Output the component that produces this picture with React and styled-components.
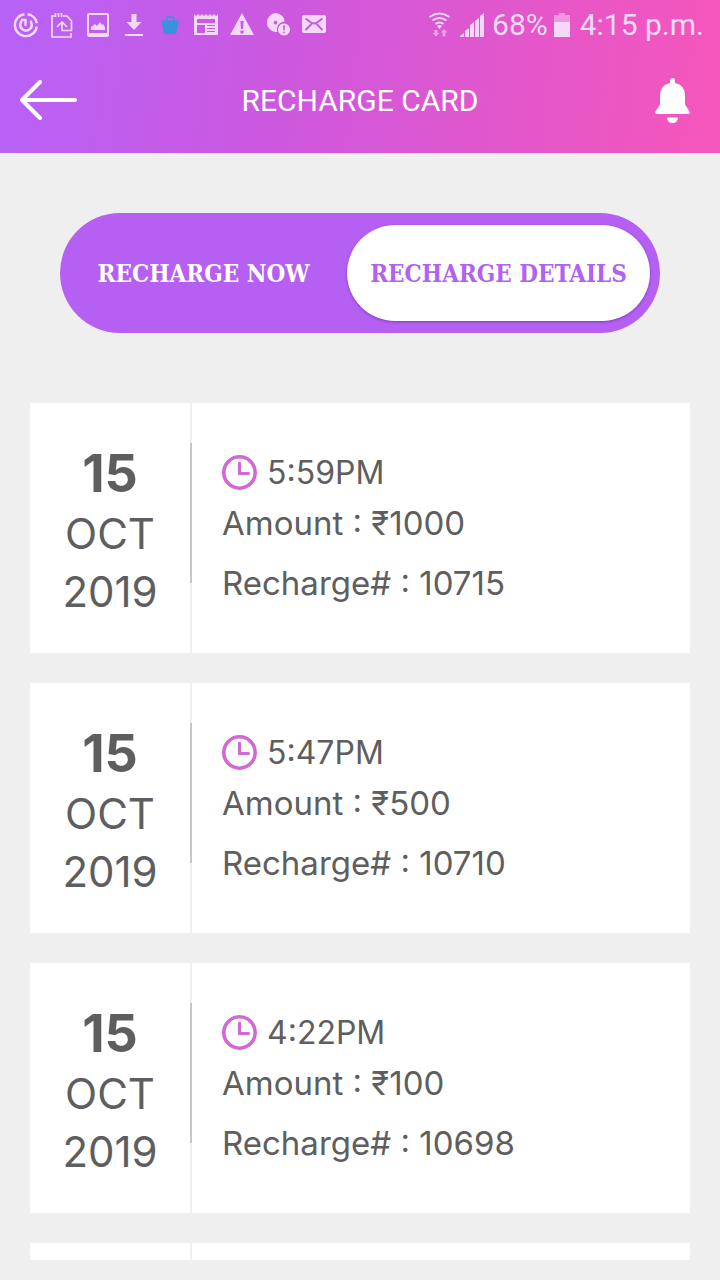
import React, { useState } from 'react'
import styled, { createGlobalStyle } from 'styled-components'

const recharges = [
  { id: '10715', day: '15', month: 'OCT', year: '2019', time: '5:59PM', amount: '₹1000' },
  { id: '10710', day: '15', month: 'OCT', year: '2019', time: '5:47PM', amount: '₹500' },
  { id: '10698', day: '15', month: 'OCT', year: '2019', time: '4:22PM', amount: '₹100' },
]

function StatusIcons() {
  return (
    <StatusGroup>
      <svg width="26" height="26" viewBox="0 0 26 26" fill="none" stroke="currentColor" strokeWidth="2.4">
        <path d="M11.5 2.2A11 11 0 1 0 23.8 14.5M14.5 2.2a11 11 0 0 1 9.4 9" />
        <path d="M17.2 8.800a5.800 5.800 0 1 1-8.400 0" strokeWidth="2.6" />
        <path d="M12.500 14V8H8" strokeWidth="2.4" />
      </svg>
      <svg width="26" height="26" viewBox="0 0 26 26" fill="none" stroke="currentColor" strokeWidth="1.7">
        <path d="M6 4H3v21h19v-4M14 4h4l4.500 5v9.500H13V11M8 15l5-5 5 5" />
        <path d="M6.500 1v4M9.500 1v4M12.500 1v4" />
      </svg>
      <svg width="26" height="26" viewBox="0 0 26 26">
        <path fillRule="evenodd" fill="currentColor" d="M4 1h18q2 0 2 2v20q0 2-2 2H4q-2 0-2-2V3q0-2 2-2zM4 3v18h18V3z" />
        <path fill="currentColor" d="M6 18v-3l4-3 2 2 3-4 2 3 1-1 2 3v3z" />
      </svg>
      <svg width="26" height="26" viewBox="0 0 26 26" fill="currentColor">
        <path d="M10.500 2h5v8h5L13 18l-7.500-8h5zM4 22h18v2H4z" />
      </svg>
      <svg width="26" height="26" viewBox="0 0 26 26">
        <path d="M9.500 9V6.500q0-1.500 1.500-1.500h4.500Q17 5 17 6.500V9" fill="none" stroke="#3793dc" strokeWidth="1.600" />
        <path fill="#3793dc" d="M4.500 8.500h17v4h-.7l-1 7.500q-.3 2-2.300 2h-9q-2 0-2.300-2l-1-7.500h-.7z" />
      </svg>
      <svg width="26" height="26" viewBox="0 0 26 26" fill="currentColor">
        <path fillRule="evenodd" d="M1 2l2 2 2-2 2 2 2-2 2 2 2-2 2 2 2-2 2 2 2-2 2 2 2-2v20q0 1-1 1H2q-1 0-1-1zM4 7v4h18V7zM4 13v8h8v-8zM14 13v1h8v-1zM14 16v1h8v-1zM14 19v1h8v-1z" />
      </svg>
      <svg width="26" height="26" viewBox="0 0 26 26" fill="currentColor">
        <path fillRule="evenodd" d="M13 1l12 22H1zM11.400 9l.6 8h2l.6-8zM11.500 18.500v3h3v-3z" />
      </svg>
      <svg width="26" height="26" viewBox="0 0 26 26" fill="currentColor">
        <path fillRule="evenodd" d="M10.500 1a9.500 9.500 0 0 1 9.300 8.500A8 8 0 0 0 12.300 20 9.500 9.500 0 1 1 10.500 1zM10.500 8.800a1.800 1.800 0 1 0 .01 0z" />
        <path fillRule="evenodd" d="M19 11.500a6 6 0 1 0 .01 0zM18 13.500h2l-.4 5h-1.200zM18.200 19.700h1.600v1.600h-1.600z" />
      </svg>
      <svg width="26" height="26" viewBox="0 0 26 26">
        <rect x="1" y="3" width="24" height="18" rx="2" fill="currentColor" />
        <path d="M4.500 6.500l5.500 4q3 2 6 0l5.500-4M4.500 18l6-6M21.500 18l-6-6" fill="none" stroke="#c259d9" strokeWidth="1.800" />
      </svg>
    </StatusGroup>
  )
}

function StatusInfo() {
  return (
    <StatusGroup $end>
      <svg width="26" height="26" viewBox="0 0 26 26" fill="none" stroke="currentColor" strokeWidth="2">
        <path d="M1.500 5q10-7 20 0M4.500 8.500q7-5 14 0M7.500 12q4-3 8 0" />
        <path d="M9 14q2.500-2 5 0l-2.500 3z" fill="currentColor" stroke="none" />
        <path d="M6.500 18h3v3h2L8 24.500 4.500 21h2zM14.500 24.500h3v-4h2L16 17l-3.500 3.500h2z" fill="currentColor" stroke="none" opacity=".55" />
      </svg>
      <svg width="26" height="26" viewBox="0 0 26 26" fill="currentColor">
        <path d="M0 25v-1l4-3v4zM5 25v-6l4-3v9zM10 25V13l4-3v15zM15 25V9l4-3v19zM20 25V4l4-3v24z" />
      </svg>
      <span>68%</span>
      <svg width="16" height="26" viewBox="0 0 16 26" fill="currentColor">
        <path d="M0 3h5V1h6v2h5v7H0z" opacity=".5" />
        <path d="M0 10h16v15H0z" />
      </svg>
      <Time>4:15 p.m.</Time>
    </StatusGroup>
  )
}

function RechargeCard({ item }) {
  return (
    <Card>
      <DateColumn>
        <Day>{item.day}</Day>
        <MonthYear>{item.month}</MonthYear>
        <MonthYear>{item.year}</MonthYear>
      </DateColumn>
      <Divider />
      <Details>
        <TimeRow>
          <svg width="36" height="36" viewBox="0 0 36 36" fill="none" stroke="#d268d3" strokeWidth="3.6">
            <circle cx="17.500" cy="17.500" r="15.700" />
            <path d="M17.500 8v10.500h9" strokeWidth="3" strokeLinecap="round" />
          </svg>
          {item.time}
        </TimeRow>
        <Line>Amount : {item.amount}</Line>
        <Line>Recharge# : {item.id}</Line>
      </Details>
    </Card>
  )
}

function App() {
  const [tab, setTab] = useState('details')

  return (
    <Page>
      <GlobalStyle />
      <Header>
        <StatusBar>
          <StatusIcons />
          <StatusInfo />
        </StatusBar>
        <TitleBar>
          <IconButton aria-label="Back">
            <svg width="58" height="42" viewBox="0 0 58 42" fill="none" stroke="#fff" strokeWidth="4" strokeLinecap="round" strokeLinejoin="round">
              <path d="M20 2L2 20l18 18M2 20h53" />
            </svg>
          </IconButton>
          <Title>RECHARGE CARD</Title>
          <IconButton aria-label="Notifications" $end>
            <svg width="36" height="46" viewBox="0 0 36 46" fill="#fff">
              <path d="M16 2.500Q16 0 18.500 0T21 2.500V5Q31 7 31 17.500v9l4.500 7q1 2.500-1.500 2.500H3q-2.500 0-1.500-2.500l4.500-7v-9Q6 7 16 5z" />
              <path d="M13 39.500h11q-.5 5.500-5.500 5.500T13 39.500z" />
            </svg>
          </IconButton>
        </TitleBar>
      </Header>
      <Tabs>
        <Tab $active={tab === 'now'} onClick={() => setTab('now')}>RECHARGE NOW</Tab>
        <Tab $active={tab === 'details'} onClick={() => setTab('details')}>RECHARGE DETAILS</Tab>
      </Tabs>
      <List>
        {recharges.map((item) => (
          <RechargeCard key={item.id} item={item} />
        ))}
        <Card>
          <DateColumn />
          <Divider />
          <Details />
        </Card>
      </List>
    </Page>
  )
}

export default App

const GlobalStyle = createGlobalStyle`
  * {
    box-sizing: border-box;
  }
  body {
    margin: 0;
    background: #efefef;
    color: #5e5e5e;
    font-family: Inter, "Open Sans", sans-serif;
  }
  button {
    border: 0;
    padding: 0;
    background: none;
    cursor: pointer;
  }
  svg {
    display: block;
    flex: none;
  }
`

const Page = styled.div`
  display: flex;
  flex-direction: column;
  height: 100vh;
  padding-bottom: 20px;
`

const Header = styled.header`
  flex: none;
  background: linear-gradient(96deg, #b762f8 0%, #cc58df 38%, #f656ba 100%);
  color: #fff;
  font-family: Roboto, sans-serif;
`

const StatusBar = styled.div`
  display: flex;
  align-items: center;
  justify-content: space-between;
  height: 49px;
  padding: 0 16px 0 13px;
  color: #f3d9f7;
`

const StatusGroup = styled.div`
  display: flex;
  align-items: center;
  gap: ${props => props.$end ? '6px' : '10px'};
  font-size: 30px;
  line-height: 48px;
`

const Time = styled.span`
  margin-left: 4px;
`

const TitleBar = styled.div`
  display: grid;
  grid-template-columns: 80px 1fr 80px;
  align-items: center;
  height: 104px;
  padding: 0 20px;
`

const IconButton = styled.button`
  justify-self: ${props => props.$end ? 'end' : 'start'};
  padding-right: ${props => props.$end ? '10px' : '0'};
`

const Title = styled.h1`
  margin: 0;
  text-align: center;
  font-size: 30px;
  line-height: 36px;
  font-weight: 400;
`

const Tabs = styled.nav`
  display: grid;
  flex: none;
  grid-template-columns: 287fr 303fr;
  height: 120px;
  margin: 60px 60px 70px;
  padding: 12px 10px 12px 0;
  border-radius: 60px;
  background: #b560f3;
`

const Tab = styled.button`
  border-radius: 48px;
  font-family: "DejaVu Serif Condensed", "DejaVu Serif", serif;
  font-size: 24px;
  font-weight: 700;
  white-space: nowrap;
  color: ${props => props.$active ? '#b062f0' : '#fff'};
  background: ${props => props.$active ? '#fff' : 'transparent'};
  box-shadow: ${props => props.$active ? '0 1px 3px rgba(60, 0, 100, 0.4)' : 'none'};
`

const List = styled.main`
  display: flex;
  flex: 1;
  flex-direction: column;
  gap: 30px;
  min-height: 0;
  padding: 0 30px;
  overflow-y: auto;
  scrollbar-width: none;
`

const Card = styled.article`
  display: flex;
  flex: none;
  min-height: 250px;
  background: #fff;
`

const DateColumn = styled.div`
  width: 160px;
  padding-top: 40px;
  text-align: center;
`

const Day = styled.div`
  font-size: 52px;
  line-height: 62px;
  font-weight: 700;
`

const MonthYear = styled.div`
  font-size: 42px;
  line-height: 58px;
`

const Divider = styled.div`
  width: 2px;
  background: linear-gradient(#c6c6c6, #c6c6c6) 0 40px / 2px 140px no-repeat #efefef;
`

const Details = styled.div`
  flex: 1;
  padding: 40px 30px 0;
  font-size: 33px;
`

const TimeRow = styled.div`
  display: flex;
  align-items: center;
  gap: 9px;
  font-size: 32px;
  line-height: 60px;
`

const Line = styled.div`
  line-height: 40px;
  margin-bottom: 20px;
`
